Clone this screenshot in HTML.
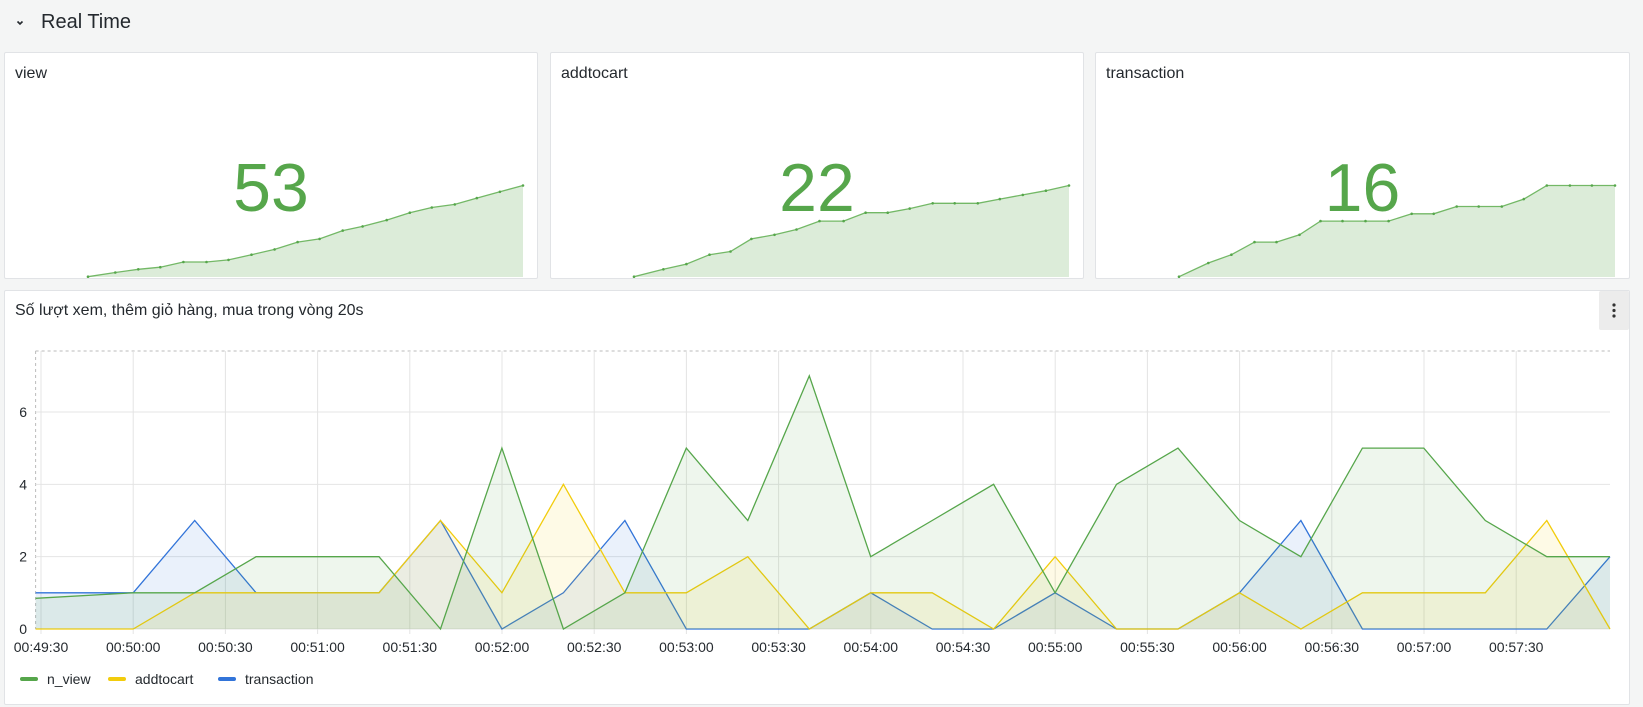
<!DOCTYPE html>
<html><head><meta charset="utf-8"><style>
body{margin:0;width:1643px;height:707px;background:#f4f5f5;font-family:"Liberation Sans","Noto Sans CJK SC",sans-serif;color:#24292e;overflow:hidden;position:relative}
.p{position:absolute;background:#fff;border:1px solid #e1e3e6;border-radius:2px;box-sizing:border-box}
.t{position:absolute;left:10px;font-size:16px}
.big{position:absolute;font-size:68px;color:#56a64b;text-align:center;line-height:1;z-index:3;top:154px}
</style></head><body>
<svg style="position:absolute;left:14px;top:17px" width="12" height="12" viewBox="0 0 12 12"><path d="M3.5 4.5 L6 7 L8.5 4.5" fill="none" stroke="#24292e" stroke-width="1.6"/></svg>
<div style="position:absolute;left:41px;top:11px;font-size:20px">Real Time</div>

<div class="p" style="left:4px;top:52px;width:534px;height:227px"><div class="t" style="top:12px">view</div></div>
<div class="p" style="left:550px;top:52px;width:534px;height:227px"><div class="t" style="top:12px">addtocart</div></div>
<div class="p" style="left:1095px;top:52px;width:535px;height:227px"><div class="t" style="top:12px">transaction</div></div>
<div class="big" style="left:4px;width:534px">53</div>
<div class="big" style="left:550px;width:534px">22</div>
<div class="big" style="left:1095px;width:535px">16</div>

<div class="p" style="left:4px;top:290px;width:1626px;height:415px"><div class="t" style="top:11px">Số lượt xem, thêm giỏ hàng, mua trong vòng 20s</div>
<div style="position:absolute;right:0;top:0;width:30px;height:39px;background:#ececec;border-radius:2px"><svg width="30" height="39"><circle cx="15" cy="14" r="1.6" fill="#333"/><circle cx="15" cy="19.5" r="1.6" fill="#333"/><circle cx="15" cy="25" r="1.6" fill="#333"/></svg></div></div>

<svg id="s" style="position:absolute;left:0;top:0;z-index:1" width="1643" height="707"></svg>
<script>
var s=document.getElementById('s'),h='';
function pl(pts){return pts.map(function(p){return p[0].toFixed(1)+','+p[1].toFixed(1)}).join(' ');}
var sp=[
[[84,264],[110,260],[132,257],[153,255],[175,250],[197,250],[218,248],[240,243],[262,238],[284,231],[305,228],[327,220],[346,216],[369,210],[391,203],[412,198],[434,195],[455,189],[477,183],[499,177]],
[[605,264],[633,257],[655,252],[677,243],[697,240],[717,228],[739,224],[760,219],[782,211],[805,211],[826,203],[847,203],[868,199],[890,194],[911,194],[933,194],[954,190],[976,186],[998,182],[1020,177]],
[[1125,264],[1153,251],[1175,243],[1197,231],[1218,231],[1240,224],[1260,211],[1281,211],[1303,211],[1325,211],[1347,204],[1368,204],[1390,197],[1411,197],[1433,197],[1454,190],[1476,177],[1498,177],[1519,177],[1541,177]]];
sp.forEach(function(a){var p=a.map(function(q){return [q[0]*1.048,q[1]*1.048]});
h+='<polygon points="'+pl(p)+' '+p[p.length-1][0].toFixed(1)+',277 '+p[0][0].toFixed(1)+',277" fill="#dcecd9"/>';
h+='<polyline points="'+pl(p)+'" fill="none" stroke="#73b866" stroke-width="1.3"/>';
p.forEach(function(q){h+='<circle cx="'+q[0].toFixed(1)+'" cy="'+q[1].toFixed(1)+'" r="1.3" fill="#56a64b"/>'});});
var y0=629,u=36.17,L=35.6,R=1610;
function Y(v){return y0-v*u}
h+='<line x1="'+L+'" y1="351" x2="'+R+'" y2="351" stroke="#bbb" stroke-dasharray="3,3"/>';
h+='<line x1="'+L+'" y1="351" x2="'+L+'" y2="629" stroke="#bbb" stroke-dasharray="3,3"/>';
[0,2,4,6].forEach(function(v){h+='<line x1="'+L+'" x2="'+R+'" y1="'+Y(v)+'" y2="'+Y(v)+'" stroke="#e4e4e4"/>';
h+='<text x="27" y="'+(Y(v)+5)+'" text-anchor="end" font-size="14" fill="#24292e">'+v+'</text>'});
var labs=['00:49:30','00:50:00','00:50:30','00:51:00','00:51:30','00:52:00','00:52:30','00:53:00','00:53:30','00:54:00','00:54:30','00:55:00','00:55:30','00:56:00','00:56:30','00:57:00','00:57:30'];
labs.forEach(function(l,i){var x=41+i*92.2;h+='<line x1="'+x+'" x2="'+x+'" y1="351" y2="634" stroke="#e4e4e4"/>';
h+='<text x="'+x+'" y="652" text-anchor="middle" font-size="14" fill="#24292e">'+l+'</text>'});
var G=[1,1,2,2,2,0,5,0,1,5,3,7,2,3,4,1,4,5,3,2,5,5,3,2,2],
Yl=[0,1,1,1,1,3,1,4,1,1,2,0,1,1,0,2,0,0,1,0,1,1,1,3,0],
B=[1,3,1,1,1,3,0,1,3,0,0,0,1,0,0,1,0,0,1,3,0,0,0,0,2];
function ser(vals,first,col,fill){var p=[[L,Y(first)]];vals.forEach(function(v,i){p.push([41+(3+2*i)*30.73,Y(v)])});
p[p.length-1][0]=R;
h+='<polygon points="'+pl(p)+' '+R+','+y0+' '+L+','+y0+'" fill="'+fill+'"/>';
h+='<polyline points="'+pl(p)+'" fill="none" stroke="'+col+'" stroke-width="1.3"/>';}
ser(B,1,'#3274d9','rgba(50,116,217,0.1)');
ser(Yl,0,'#f2cc0c','rgba(242,204,12,0.1)');
ser(G,0.85,'#56a64b','rgba(86,166,75,0.1)');
[['n_view','#56a64b',20],['addtocart','#f2cc0c',108],['transaction','#3274d9',218]].forEach(function(a){
h+='<line x1="'+(a[2]+2)+'" x2="'+(a[2]+16)+'" y1="679" y2="679" stroke="'+a[1]+'" stroke-width="4" stroke-linecap="round"/>';
h+='<text x="'+(a[2]+27)+'" y="684" font-size="14" fill="#24292e">'+a[0]+'</text>'});
s.innerHTML=h;
</script>
</body></html>
